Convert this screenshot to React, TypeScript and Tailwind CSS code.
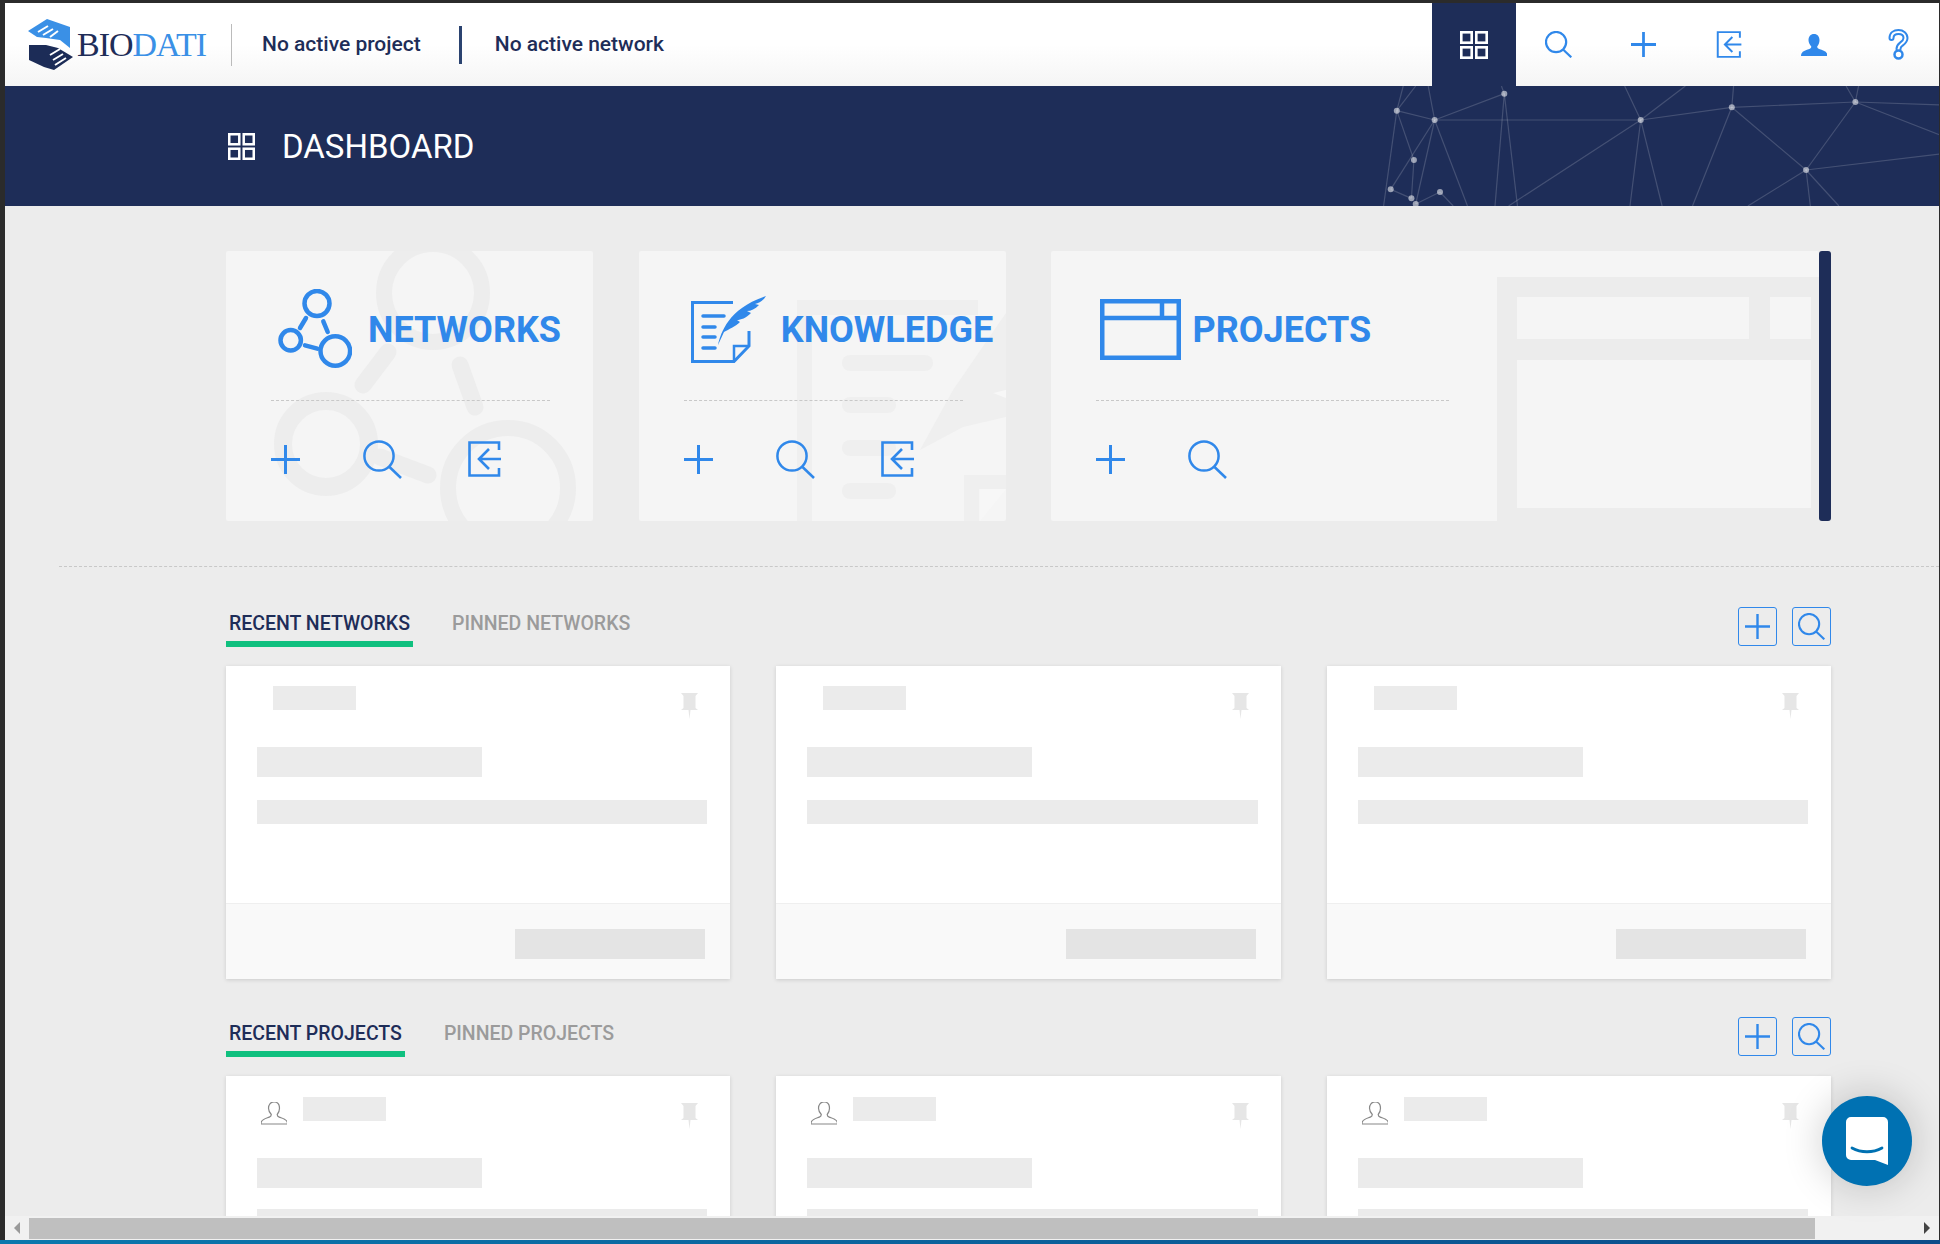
import React from 'react'

const BLUE = '#3088ea'
const PERSON = 'M13 0c3.5 0 5.5 2.7 5.5 6.2 0 2.6-1 4.8-2.3 6.3 0 1.3.5 2 2 2.6 3 1.2 6.6 2 7.8 4.4.4.8.5 1.6.5 2.5H0c0-.9.1-1.7.5-2.5 1.2-2.4 4.8-3.2 7.8-4.4 1.5-.6 2-1.3 2-2.6C9 11 7.5 8.8 7.5 6.2 7.5 2.7 9.5 0 13 0z'

const GridIcon = ({ size }: { size: number }) => (
  <svg width={size} height={size} viewBox="0 0 28 28" fill="none" stroke="#fff" strokeWidth="2.6">
    <rect x="1.3" y="1.3" width="10.4" height="10.4" />
    <rect x="16.3" y="1.3" width="10.4" height="10.4" />
    <rect x="1.3" y="16.3" width="10.4" height="10.4" />
    <rect x="16.3" y="16.3" width="10.4" height="10.4" />
  </svg>
)

const SearchIcon = ({ size, sw = 2.5 }: { size: number; sw?: number }) => (
  <svg width={size} height={size} viewBox="0 0 39 39" fill="none" stroke={BLUE} strokeWidth={sw}>
    <circle cx="16" cy="16" r="14.6" />
    <path d="M26.5 27 38 38" />
  </svg>
)

const PlusIcon = ({ size, sw = 3 }: { size: number; sw?: number }) => (
  <svg width={size} height={size} viewBox="0 0 29 29" fill="none" stroke={BLUE} strokeWidth={sw}>
    <path d="M0 14.5h29M14.5 0v29" />
  </svg>
)

const ExitIcon = ({ w, h }: { w: number; h: number }) => (
  <svg width={w} height={h} viewBox="0 0 33 36" fill="none" stroke={BLUE} strokeWidth="2.6">
    <path d="M31 9V1.5H1.5v33H31V27" />
    <path d="M33 18H11M21 8 11 18l10 10" />
  </svg>
)

const HelpIcon = () => (
  <svg width="21" height="31" viewBox="0 0 21 31" fill="none">
    <path d="M3.5 9C3.5 5 6.5 3 10.5 3s7 2.5 7 6c0 3-2 4.500-4 6-1.500 1.100-3 2-3 5" stroke={BLUE} strokeWidth="6" strokeLinecap="round" />
    <path d="M3.500 9C3.500 5 6.500 3 10.500 3s7 2.500 7 6c0 3-2 4.500-4 6-1.500 1.100-3 2-3 5" stroke="#fff" strokeWidth="2" strokeLinecap="round" />
    <circle cx="10.500" cy="25.500" r="4" stroke={BLUE} strokeWidth="2.500" fill="#fff" />
  </svg>
)

const Pin = () => (
  <svg width="17" height="26" viewBox="0 0 17 26" fill="#e6e6e6">
    <path d="M0 0h17l-2.500 3v12l2.500 2H0l2.500-2V3z" />
    <path d="M7.500 17h2L8.500 26z" />
  </svg>
)

const BannerNetwork = () => {
  // points read off the picture, x over 2.8 and y over 3
  const nodes = [
    [47, 332], [153, 360], [348, 281], [730, 360], [985, 322], [1331, 306],
    [1193, 510], [95, 480], [30, 568], [88, 595], [168, 576], [100, 612],
  ]
  const lines = [
    [47, 332, 153, 360], [153, 360, 348, 281], [153, 360, 730, 360], [730, 360, 985, 322],
    [985, 322, 1331, 306], [1331, 306, 1568, 315], [1331, 306, 1568, 405], [985, 322, 1193, 510],
    [1331, 306, 1193, 510], [1193, 510, 1568, 462], [1193, 510, 1030, 618], [1193, 510, 1205, 618],
    [1193, 510, 1285, 618], [985, 322, 875, 618], [730, 360, 360, 618], [730, 360, 700, 618],
    [730, 360, 790, 618], [730, 360, 685, 258], [730, 360, 855, 258], [985, 322, 990, 258],
    [1331, 306, 1305, 258], [1331, 306, 1340, 258], [348, 281, 322, 618], [348, 281, 385, 618],
    [348, 281, 340, 258], [153, 360, 135, 258], [153, 360, 245, 618], [153, 360, 30, 568],
    [153, 360, 100, 612], [47, 332, 95, 480], [47, 332, 10, 618], [47, 332, 100, 258],
    [47, 332, 65, 258], [95, 480, 88, 595], [168, 576, 100, 612], [168, 576, 205, 618], [30, 568, 88, 595],
  ]
  const px = (x: number) => x / 2.8
  const py = (y: number) => (y - 258) / 3
  return (
    <svg className="absolute top-0 right-[-1px]" width="560" height="120" viewBox="0 0 560 120">
      {lines.map(([a, b, c, d], i) => (
        <line key={i} x1={px(a)} y1={py(b)} x2={px(c)} y2={py(d)} stroke="#fff" strokeOpacity="0.17" strokeWidth="1.200" />
      ))}
      {nodes.map(([a, b], i) => (
        <circle key={i} cx={px(a)} cy={py(b)} r="3" fill="#fff" fillOpacity="0.55" />
      ))}
    </svg>
  )
}

const Logo = () => (
  <div className="flex items-center">
    <svg width="60" height="60" viewBox="0 0 60 60" className="ml-[-5px] mr-[-7px] shrink-0">
      <path d="M4 16 23 4l23 8v21l-10-8-14-2-9-1z" fill="#3a90e6" />
      <path d="M5 30h17l12 3 15 9-19 13-10-3-15-7z" fill="#1c2c57" />
      <path d="M14 17l10-6M19 20l10-6M26 22l8-6M26 40l10-6M29 45l10-6M31 50l11-7" stroke="#fff" strokeWidth="2" fill="none" />
    </svg>
    <span className="font-['Liberation_Serif',serif] text-[34px] leading-none tracking-[-1px] text-[#1e2d58]">
      BIO<span className="text-[#3a90e6]">DATI</span>
    </span>
  </div>
)

const NetworksIcon = () => (
  <svg width="74" height="80" viewBox="0 0 74 80" fill="none" stroke={BLUE} strokeWidth="4.500">
    <circle cx="39" cy="14.500" r="12.500" />
    <circle cx="12.700" cy="51.300" r="10.200" />
    <circle cx="57.300" cy="62" r="14.800" />
    <path d="M28 29l-6 10M45.300 32.300l4.400 10.700M27 56.300l12.300 3.400" strokeWidth="4.500" strokeLinecap="round" />
  </svg>
)

const KnowledgeIcon = () => (
  <svg width="75" height="67" viewBox="0 0 75 67" fill="none" stroke={BLUE} strokeWidth="3">
    <path d="M42 6.500H1.500v59H43L58 50V35" />
    <path d="M43 65V50h15" strokeWidth="2.500" />
    <path d="M12 20h21M12 31h12M12 41h12M12 52h12" strokeWidth="3.500" strokeLinecap="round" />
    <path d="M27 49C30 36 38 12 75 0c-3 5-7 7-11 8l4 1c-4 4-8 6-12 6l4 2c-5 5-10 7-14 7l3 2c-5 5-11 7-16 10z" fill={BLUE} stroke="none" />
  </svg>
)

const ProjectsIcon = () => (
  <svg width="81" height="61" viewBox="0 0 81 61" fill="none" stroke={BLUE} strokeWidth="4.500">
    <rect x="2.250" y="2.250" width="76.500" height="56.500" />
    <path d="M2 19h77M62 2v17" />
  </svg>
)

const NetworksMark = () => (
  <svg className="absolute inset-0" width="367" height="270" viewBox="0 0 367 270" fill="none" stroke="#ededed">
    <circle cx="207" cy="42" r="49" strokeWidth="16" />
    <circle cx="100" cy="193" r="43" strokeWidth="18" />
    <circle cx="282" cy="237" r="60" strokeWidth="16" />
    <path d="M162 101l-25 33M234 114l15 42M154 206l48 18" strokeWidth="17" strokeLinecap="round" />
  </svg>
)

const KnowledgeMark = () => (
  <svg className="absolute inset-0" width="367" height="270" viewBox="0 0 367 270" fill="#efefef">
    <path d="M158 49h181v15H173v206h-15z" />
    <path d="M325 224h42v14h-27v32h-15z" />
    <path d="M281 199l33-60 53-77v104l-43 10z" />
    <path d="M354 142l13-3v8z" fill="#f7f7f7" />
    <path d="M341 238h26l-26 32z" fill="#f7f7f7" />
    <rect x="203" y="104" width="91" height="16" rx="8" />
    <rect x="203" y="146" width="54" height="16" rx="8" />
    <rect x="203" y="189" width="54" height="16" rx="8" />
    <rect x="203" y="232" width="54" height="16" rx="8" />
  </svg>
)

const ProjectsMark = () => (
  <svg className="absolute inset-0" width="769" height="270" viewBox="0 0 769 270">
    <rect x="446" y="26" width="323" height="244" fill="#ececec" />
    <rect x="466" y="46" width="232" height="42" fill="#f5f5f5" />
    <rect x="719" y="46" width="41" height="42" fill="#f5f5f5" />
    <rect x="466" y="109" width="294" height="148" fill="#f5f5f5" />
  </svg>
)

const QuickCard = ({ icon, mark, title, exit = true, wide = false, gapClass }: {
  icon: React.ReactNode
  mark: React.ReactNode
  title: string
  exit?: boolean
  wide?: boolean
  gapClass: string
}) => (
  <div className={`relative h-[270px] overflow-hidden rounded-[2px] bg-[#f5f5f5] pt-[28px] ${wide ? 'flex-1' : 'w-[367px]'}`}>
    {mark}
    <div className="relative">
      <div className={`flex h-[100px] items-center ${wide ? 'pl-[49px]' : 'pl-[52px]'} ${gapClass}`}>
        {icon}
        <span className="mt-[2px] font-['Roboto',sans-serif] text-[36px] font-bold text-[#3088ea]">{title}</span>
      </div>
      <div className={`ml-[45px] mt-[21px] border-t border-dashed border-[#c8c8c8] ${wide ? 'w-[353px]' : 'w-[279px]'}`} />
      <div className="ml-[45px] mt-[38px] flex h-[40px] items-center">
        <PlusIcon size={29} />
        <div className="ml-[63px]"><SearchIcon size={39} /></div>
        {exit && <div className="ml-[66px]"><ExitIcon w={33} h={36} /></div>}
      </div>
    </div>
  </div>
)

const ListCard = ({ withUser }: { withUser: boolean }) => (
  <div className="flex h-[313px] flex-1 flex-col bg-white shadow-[0_1px_4px_rgba(0,0,0,0.14)]">
    <div className="h-[237px] pl-[31px] pr-[23px]">
      <div className={`flex items-start justify-between pr-[9px] ${withUser ? 'pt-[21px]' : 'pt-[20px]'}`}>
        <div className="flex items-start">
          <div className={withUser ? 'w-[46px]' : 'w-[16px]'}>
            {withUser && (
              <svg className="mt-[5px] ml-[4px]" width="26" height="23" viewBox="0 0 26 23" fill="none" stroke="#888" strokeWidth="1.200">
                <path d={PERSON} />
              </svg>
            )}
          </div>
          <div className="h-[24px] w-[83px] bg-[#ebebeb]" />
        </div>
        <div className={withUser ? 'mt-[6px]' : 'mt-[7px]'}><Pin /></div>
      </div>
      <div className={`h-[30px] w-[225px] bg-[#ebebeb] ${withUser ? 'mt-[29px]' : 'mt-[28px]'}`} />
      <div className={`h-[24px] bg-[#ebebeb] ${withUser ? 'mt-[21px]' : 'mt-[23px]'}`} />
    </div>
    <div className="flex flex-1 justify-end border-t border-[#efefef] bg-[#f9f9f9] pr-[25px] pt-[25px]">
      <div className="h-[30px] w-[190px] bg-[#e4e4e4]" />
    </div>
  </div>
)

const Tab = ({ label, active }: { label: string; active?: boolean }) => (
  <div className={`border-b-[6px] px-[3px] pb-[5px] font-['Roboto',sans-serif] text-[19.5px] font-medium leading-[24px] ${active ? 'border-[#10c07f] text-[#1e2d58]' : 'border-transparent text-[#9b9b9b]'}`}>
    {label}
  </div>
)

const Section = ({ recent, pinned, withUser, className }: { recent: string; pinned: string; withUser: boolean; className: string }) => (
  <section className={className}>
    <div className="flex h-[40px] items-start justify-between">
      <div className="flex gap-[36px] pt-[5px]">
        <Tab label={recent} active />
        <Tab label={pinned} />
      </div>
      <div className="flex gap-[15px]">
        <div className="flex h-[39px] w-[39px] items-center justify-center rounded-[3px] border border-[#3088ea]">
          <PlusIcon size={25} sw={2.800} />
        </div>
        <div className="flex h-[39px] w-[39px] items-center justify-center rounded-[3px] border border-[#3088ea]">
          <SearchIcon size={27} sw={3} />
        </div>
      </div>
    </div>
    <div className="mt-[19px] flex gap-[46px]">
      <ListCard withUser={withUser} />
      <ListCard withUser={withUser} />
      <ListCard withUser={withUser} />
    </div>
  </section>
)

const Arrow = ({ right }: { right?: boolean }) => (
  <div className="flex h-full w-[24px] items-center justify-center">
    <svg width="8" height="12" viewBox="0 0 8 12" fill={right ? '#444' : '#9a9a9a'}>
      <path d={right ? 'M1 0l6 6-6 6z' : 'M7 0L1 6l6 6z'} />
    </svg>
  </div>
)

export default function App() {
  return (
    <div className="relative flex h-[1244px] flex-col overflow-hidden bg-[#2b2b2b] pt-[3px]">
      <div className="flex min-h-0 flex-1 flex-col pl-[5px] pr-[1px]">
        <header className="flex h-[83px] shrink-0 items-center justify-between bg-linear-to-b from-white via-white to-[#f5f5f5] font-['Roboto',sans-serif]">
          <div className="flex items-center">
            <div className="ml-[24px] w-[178px]"><Logo /></div>
            <div className="ml-[24px] h-[42px] w-px bg-[#bbb]" />
            <span className="ml-[30px] text-[21px] font-medium text-[#1e2d58]">No active project</span>
            <div className="ml-[38px] h-[38px] w-[3px] bg-[#2b4370]" />
            <span className="ml-[33px] text-[21px] font-medium text-[#1e2d58]">No active network</span>
          </div>
          <nav className="mr-[-2px] flex h-full items-center">
            <div className="flex h-full w-[84px] items-center justify-center bg-[#1e2d58]"><GridIcon size={28} /></div>
            <div className="flex w-[85px] justify-center"><SearchIcon size={27} sw={3.200} /></div>
            <div className="flex w-[85px] justify-center"><PlusIcon size={25} sw={3.200} /></div>
            <div className="flex w-[85px] justify-center"><ExitIcon w={26} h={27} /></div>
            <div className="flex w-[85px] justify-center">
              <svg width="26" height="22" viewBox="0 0 26 22" fill={BLUE}><path d={PERSON} /></svg>
            </div>
            <div className="flex w-[85px] justify-center"><HelpIcon /></div>
          </nav>
        </header>

        <div className="relative flex h-[120px] shrink-0 items-center gap-[27px] overflow-hidden bg-[#1e2d58] pl-[223px]">
          <GridIcon size={27} />
          <h1 className="mt-[1px] font-['Roboto',sans-serif] text-[33px] font-normal text-white">DASHBOARD</h1>
          <BannerNetwork />
        </div>

        <main className="min-h-0 flex-1 overflow-hidden bg-[#ececec] pt-[45px]">
          <div className="ml-[221px] flex w-[1605px] gap-[46px]">
            <QuickCard icon={<NetworksIcon />} mark={<NetworksMark />} title="NETWORKS" gapClass="gap-[16px]" />
            <QuickCard icon={<KnowledgeIcon />} mark={<KnowledgeMark />} title="KNOWLEDGE" gapClass="gap-[15px]" />
            <div className="ml-[-1px] flex w-[781px]">
              <QuickCard icon={<ProjectsIcon />} mark={<ProjectsMark />} title="PROJECTS" exit={false} wide gapClass="gap-[12px]" />
              <div className="w-[12px] rounded-[3px] bg-[#1e2d58]" />
            </div>
          </div>
          <div className="ml-[54px] mt-[45px] border-t border-dashed border-[#c8c8c8]" />
          <div className="ml-[221px] w-[1605px]">
            <Section recent="RECENT NETWORKS" pinned="PINNED NETWORKS" withUser={false} className="mt-[40px]" />
            <Section recent="RECENT PROJECTS" pinned="PINNED PROJECTS" withUser className="mt-[38px]" />
          </div>
        </main>

        <div className="flex h-[24px] shrink-0 bg-[#f1f1f1]">
          <Arrow />
          <div className="mt-[2px] mb-px w-[1786px] bg-[#bfbfbf]" />
          <div className="flex-1" />
          <Arrow right />
        </div>
      </div>
      <div className="h-[4px] shrink-0 bg-linear-to-r from-[#0b78ad] to-[#0c4c8a]" />

      <div className="absolute left-[1822px] top-[1096px] flex h-[90px] w-[90px] items-center justify-center rounded-full bg-[#0071b2] shadow-[0_0_40px_rgba(0,0,0,0.2)]">
        <svg width="42" height="48" viewBox="0 0 42 48">
          <path d="M5 0h32a5 5 0 0 1 5 5v43l-13-5H5a5 5 0 0 1-5-5V5a5 5 0 0 1 5-5z" fill="#fff" />
          <path d="M6 31c9 5 21 5 30 0" fill="none" stroke="#0071b2" strokeWidth="2.800" strokeLinecap="round" />
        </svg>
      </div>
    </div>
  )
}
